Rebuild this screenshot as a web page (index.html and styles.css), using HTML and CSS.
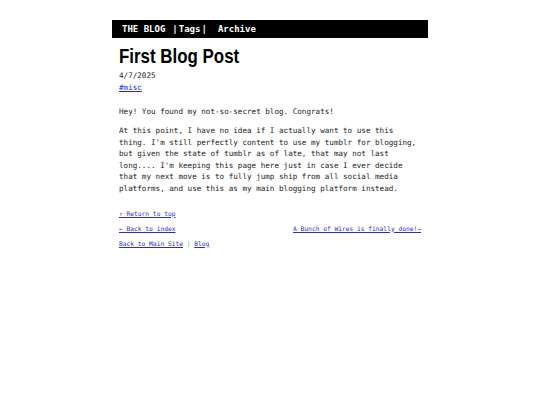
FILE: index.html
```html
<!DOCTYPE html>
<html lang="en">
<head>
<meta charset="utf-8">
<title>First Blog Post</title>
<link rel="stylesheet" href="styles.css">
</head>
<body>
<div class="page" id="top">
  <header class="nav">
    <a class="nav-home" href="#">THE BLOG</a>
    <span class="nav-mid"><span class="sep">|</span><a href="#">Tags</a><span class="sep">|</span></span>
    <a class="nav-archive" href="#">Archive</a>
  </header>
  <main class="content">
    <h1 class="title"><span class="title-text">First Blog Post</span></h1>
    <div class="meta">
      <div class="date">4/7/2025</div>
      <div class="tags"><a href="#">#misc</a></div>
    </div>
    <article class="post">
      <p>Hey! You found my not-so-secret blog. Congrats!</p>
      <p>At this point, I have no idea if I actually want to use this thing. I'm still perfectly content to use my tumblr for blogging, but given the state of tumblr as of late, that may not last long.... I'm keeping this page here just in case I ever decide that my next move is to fully jump ship from all social media platforms, and use this as my main blogging platform instead.</p>
    </article>
    <footer class="post-foot">
      <div class="foot-row"><a href="#top">↑ Return to top</a></div>
      <div class="foot-row pager">
        <a href="#">← Back to index</a>
        <a href="#">A Bunch of Wires is finally done!→ </a>
      </div>
      <div class="foot-row"><a href="#">Back to Main Site</a> <span class="pipe">|</span> <a href="#">Blog</a></div>
    </footer>
  </main>
</div>
</body>
</html>
```

FILE: styles.css
```css
html, body {
  margin: 0;
  padding: 0;
  background: #ffffff;
}

body {
  font-family: "DejaVu Sans Mono", "Liberation Mono", monospace;
  color: #222222;
}

a {
  color: #2a2ad4;
}

.page {
  width: 316px;
  margin: 20px auto 0;
}

.nav {
  height: 18px;
  background: #000000;
  display: flex;
  align-items: center;
  padding-left: 10px;
  font-family: "DejaVu Sans Mono", monospace;
  font-weight: bold;
  font-size: 9px;
  line-height: 18px;
}

.nav a {
  color: #ffffff;
  text-decoration: none;
}

.nav-mid {
  display: inline-flex;
  gap: 1px;
  margin-left: 7px;
  color: #ffffff;
}

.nav-archive {
  margin-left: 11px;
}

.content {
  padding: 6px 7px 0;
}

.title {
  font-family: "Liberation Sans", "Arial", sans-serif;
  font-weight: bold;
  font-size: 21px;
  line-height: 24px;
  margin: 0 0 2px;
  color: #000000;
}

.title-text {
  display: inline-block;
  transform: scaleX(0.805);
  transform-origin: left center;
}

.meta {
  font-size: 7.6px;
  line-height: 12px;
}

.post {
  margin-top: 12px;
  font-size: 7.6px;
  line-height: 11.5px;
}

.post p {
  margin: 0 0 7.5px;
}

.post-foot {
  margin-top: 14.5px;
  font-size: 6.25px;
  line-height: 10px;
}

.foot-row {
  margin-top: 5px;
}

.foot-row:first-child {
  margin-top: 0;
}

.pager {
  display: flex;
  justify-content: space-between;
}

.pipe {
  color: #888888;
}
```
